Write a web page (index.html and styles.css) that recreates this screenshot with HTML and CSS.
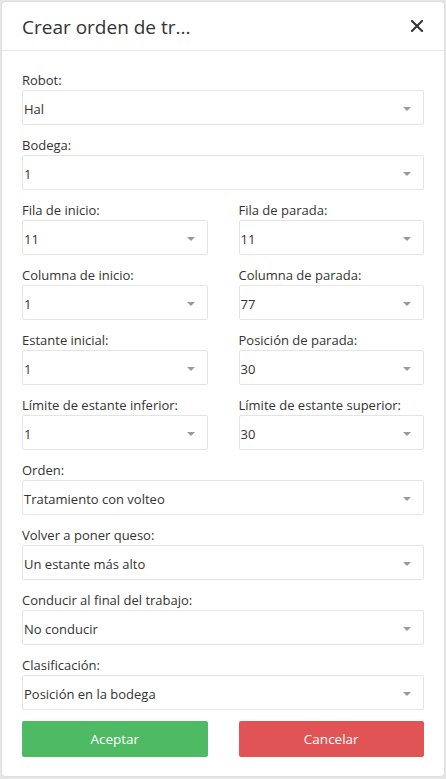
FILE: index.html
```html
<!DOCTYPE html>
<html lang="es">
<head>
<meta charset="utf-8">
<title>Crear orden de trabajo</title>
<link rel="stylesheet" href="styles.css">
</head>
<body>
<div class="modal">
  <div class="modal-header">
    <h4 class="modal-title">Crear orden de tr...</h4>
    <button class="close" type="button" aria-label="Cerrar">
      <svg width="12" height="12" viewBox="0 0 12 12"><path d="M1 1 L11 11 M11 1 L1 11" stroke="#333" stroke-width="2" stroke-linecap="square"/></svg>
    </button>
  </div>
  <div class="modal-body">
    <div class="group">
      <label class="label">Robot:</label>
      <div class="select"><span>Hal</span><i class="caret"></i></div>
    </div>
    <div class="group">
      <label class="label">Bodega:</label>
      <div class="select"><span>1</span><i class="caret"></i></div>
    </div>
    <div class="row">
      <div class="group">
        <label class="label">Fila de inicio:</label>
        <div class="select"><span>11</span><i class="caret"></i></div>
      </div>
      <div class="group">
        <label class="label">Fila de parada:</label>
        <div class="select"><span>11</span><i class="caret"></i></div>
      </div>
    </div>
    <div class="row">
      <div class="group">
        <label class="label">Columna de inicio:</label>
        <div class="select"><span>1</span><i class="caret"></i></div>
      </div>
      <div class="group">
        <label class="label">Columna de parada:</label>
        <div class="select"><span>77</span><i class="caret"></i></div>
      </div>
    </div>
    <div class="row">
      <div class="group">
        <label class="label">Estante inicial:</label>
        <div class="select"><span>1</span><i class="caret"></i></div>
      </div>
      <div class="group">
        <label class="label">Posición de parada:</label>
        <div class="select"><span>30</span><i class="caret"></i></div>
      </div>
    </div>
    <div class="row">
      <div class="group">
        <label class="label">Límite de estante inferior:</label>
        <div class="select"><span>1</span><i class="caret"></i></div>
      </div>
      <div class="group">
        <label class="label">Límite de estante superior:</label>
        <div class="select"><span>30</span><i class="caret"></i></div>
      </div>
    </div>
    <div class="group">
      <label class="label">Orden:</label>
      <div class="select"><span>Tratamiento con volteo</span><i class="caret"></i></div>
    </div>
    <div class="group">
      <label class="label">Volver a poner queso:</label>
      <div class="select"><span>Un estante más alto</span><i class="caret"></i></div>
    </div>
    <div class="group">
      <label class="label">Conducir al final del trabajo:</label>
      <div class="select"><span>No conducir</span><i class="caret"></i></div>
    </div>
    <div class="group">
      <label class="label">Clasificación:</label>
      <div class="select"><span>Posición en la bodega</span><i class="caret"></i></div>
    </div>
    <div class="row buttons">
      <button class="btn btn-success" type="button">Aceptar</button>
      <button class="btn btn-danger" type="button">Cancelar</button>
    </div>
  </div>
</div>
</body>
</html>
```
FILE: styles.css
```css
html, body {
  margin: 0;
  padding: 0;
}
body {
  background: #e6e6e6;
  padding: 2px;
  font-family: "Open Sans", "Noto Sans", "Liberation Sans", sans-serif;
  color: #333;
  box-sizing: border-box;
  height: 779px;
}
.modal {
  background: #fff;
  border-radius: 3px;
  height: 774px;
  box-sizing: border-box;
  box-shadow: 0 0 1px rgba(0,0,0,0.25);
}
.modal-header {
  height: 48px;
  border-bottom: 1px solid #e5e5e5;
  display: flex;
  align-items: center;
  justify-content: space-between;
  padding: 0 21px 0 20px;
}
.modal-title {
  margin: 0;
  font-size: 19px;
  font-weight: 400;
  color: #333;
  line-height: 24px;
  padding-top: 1px;
}
.close {
  border: 0;
  background: none;
  padding: 0;
  display: flex;
  width: 12px;
  height: 12px;
}
.modal-body {
  padding: 20px 20px 0 20px;
}
.group {
  margin-bottom: 11px;
}
.label {
  display: block;
  font-size: 13px;
  line-height: 19px;
  height: 19px;
  color: #333;
}
.select {
  height: 35px;
  border: 1px solid #e4e4e4;
  border-radius: 2px;
  box-sizing: border-box;
  display: flex;
  align-items: center;
  justify-content: space-between;
  padding: 0 12px 0 1px;
  font-size: 13px;
  color: #333;
}
.select span {
  padding-top: 2px;
}
.caret {
  width: 0;
  height: 0;
  border-left: 4px solid transparent;
  border-right: 4px solid transparent;
  border-top: 4px solid #999;
  margin-top: 2px;
}
.row {
  display: grid;
  grid-template-columns: 1fr 1fr;
  column-gap: 31px;
}
.btn {
  height: 36px;
  border: 0;
  border-radius: 2px;
  color: #fff;
  font-family: inherit;
  font-size: 13.5px;
}
.btn-success {
  background: #4fba64;
}
.btn-danger {
  background: #e05455;
}
```
